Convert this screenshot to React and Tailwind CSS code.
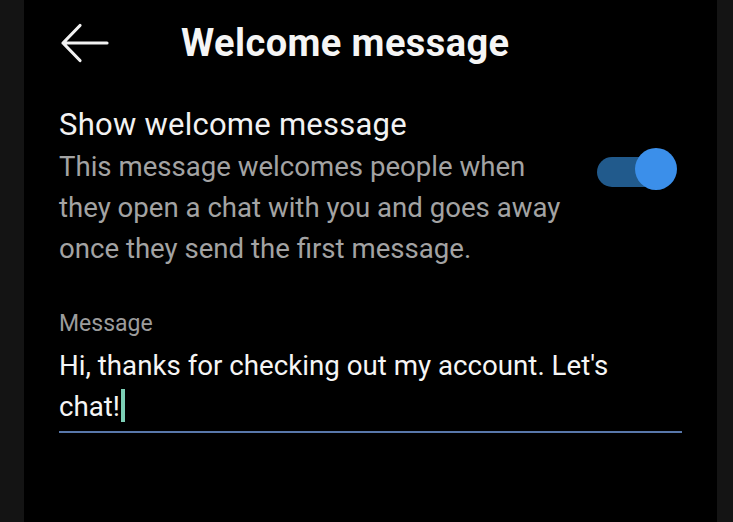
import React, { useState } from 'react';

const BackArrow = () => (
  <svg width="49" height="40" viewBox="0 0 49 40" fill="none" className="block">
    <path
      d="M47 20H3M20 2.5L3 20L20 37.5"
      stroke="#f2f2f2"
      strokeWidth="3.2"
      strokeLinecap="round"
      strokeLinejoin="round"
    />
  </svg>
);

const Toggle = ({ on, onChange }) => (
  <button
    onClick={() => onChange(!on)}
    className="relative w-[80px] h-[42px] shrink-0"
    aria-pressed={on}
  >
    <span className="absolute left-0 top-[9px] w-[62px] h-[30px] rounded-full bg-[#215a8c]" />
    <span className="absolute right-0 top-0 w-[42px] h-[42px] rounded-full bg-[#3b8fea]" />
  </button>
);

const App = () => {
  const [showWelcome, setShowWelcome] = useState(true);

  return (
    <div
      className="w-[733px] h-[522px] bg-[#141414] flex overflow-hidden"
      style={{ fontFamily: 'Roboto, "Noto Sans", sans-serif' }}
    >
      <div className="w-[24px] shrink-0" />

      {/* Main panel */}
      <div className="w-[693px] h-full bg-black px-[35px] flex flex-col">
        {/* Header */}
        <div className="h-[86px] flex items-center">
          <div className="ml-[1px] w-[121px]">
            <BackArrow />
          </div>
          <h1 className="text-[38px] leading-[40px] font-bold text-[#f5f5f5] tracking-[0.4px]">
            Welcome message
          </h1>
        </div>

        {/* Toggle row */}
        <div className="mt-[21px] flex items-start justify-between">
          <div className="w-[514px]">
            <div className="text-[31px] leading-[36px] text-[#f2f2f2] tracking-[0.25px]">Show welcome message</div>
            <p className="mt-[3px] text-[27.6px] leading-[41px] text-[#a3a3a3]">
              This message welcomes people when they open a chat with you and goes away once they send the first message.
            </p>
          </div>
          <div className="mt-[41px] mr-[5px]">
            <Toggle on={showWelcome} onChange={setShowWelcome} />
          </div>
        </div>

        {/* Message field */}
        <div className="mt-[42px]">
          <div className="text-[23px] leading-[26px] text-[#9c9c9c]">Message</div>
          <div className="mt-[8px] pb-[4px] border-b-2 border-[#5877aa]">
            <p className="w-[580px] text-[27.7px] leading-[41px] text-[#f5f5f5]">
              Hi, thanks for checking out my account. Let's chat!
              <span className="inline-block align-[-6px] ml-[1px] w-[4px] h-[33px] bg-[#7dcfb6]" />
            </p>
          </div>
        </div>
      </div>

      <div className="flex-1" />
    </div>
  );
};

export default App;
